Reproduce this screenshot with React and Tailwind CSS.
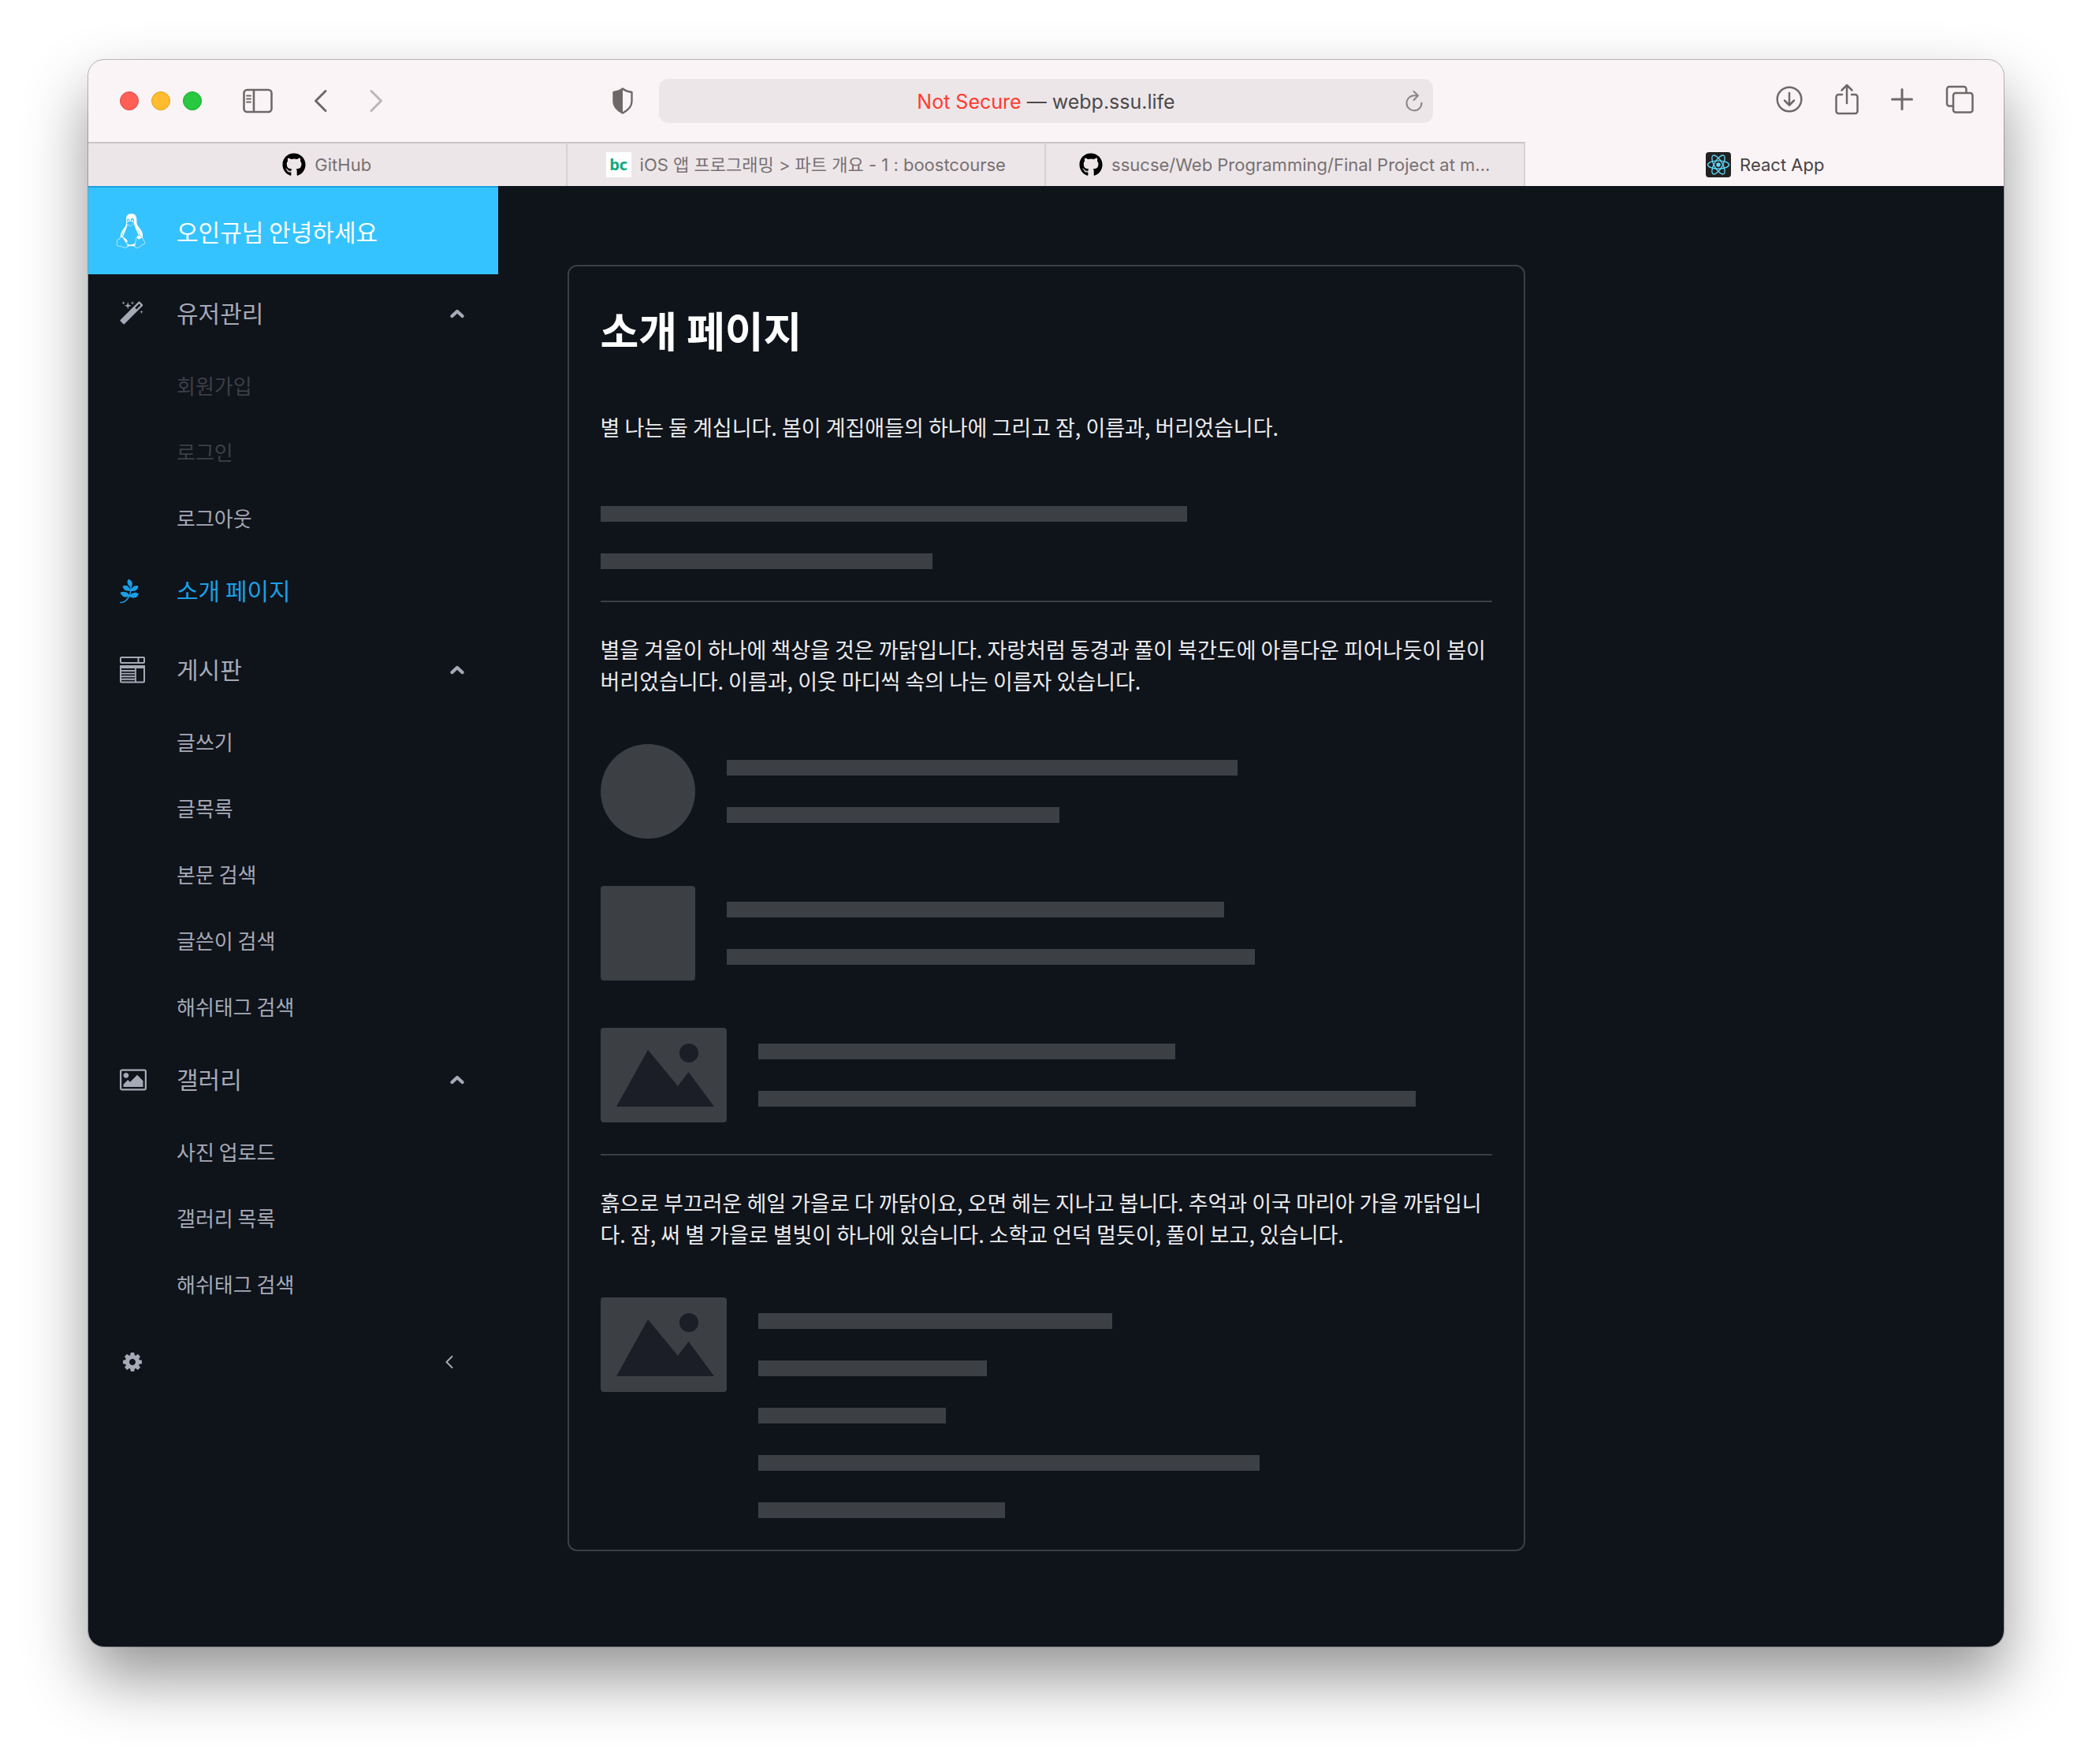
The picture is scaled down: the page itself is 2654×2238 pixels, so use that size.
import React from "react";
import { FaGithub, FaLinux, FaPagelines } from "react-icons/fa";

const CJK = "font-['Noto_Sans_CJK_KR','Noto_Sans',sans-serif]";

/* ---------- toolbar icons ---------- */

function SidebarIcon() {
  return (
    <svg width="38" height="32" viewBox="0 0 38 32" fill="none" stroke="#6f6869" strokeWidth="2.6">
      <rect x="1.5" y="2" width="35" height="28" rx="4" />
      <path d="M14 2v28" />
      <path d="M5 9.5h5M5 13.5h5M5 17.5h5" strokeWidth="1.8" strokeLinecap="round" />
    </svg>
  );
}

function BackIcon() {
  return (
    <svg width="18" height="30" viewBox="0 0 18 30" fill="none" stroke="#6f6869" strokeWidth="3" strokeLinecap="round" strokeLinejoin="round">
      <path d="M15 2.500L2.500 15L15 27.500" />
    </svg>
  );
}

function ForwardIcon() {
  return (
    <svg width="18" height="30" viewBox="0 0 18 30" fill="none" stroke="#bcb6b8" strokeWidth="3" strokeLinecap="round" strokeLinejoin="round">
      <path d="M3 2.500L15.500 15L3 27.500" />
    </svg>
  );
}

function ShieldIcon() {
  return (
    <svg width="28" height="34" viewBox="0 0 28 34">
      <path d="M14 1.500C11 4 6 5.500 2.500 6v12c0 6.500 5 11 11.500 14.500C20.500 29 25.500 24.500 25.500 18V6C22 5.500 17 4 14 1.500z" fill="none" stroke="#6f6869" strokeWidth="2.400" strokeLinejoin="round" />
      <path d="M14 1.500C11 4 6 5.500 2.500 6v12c0 6.500 5 11 11.500 14.500z" fill="#6f6869" />
    </svg>
  );
}

function ReloadIcon() {
  return (
    <svg width="24" height="28" viewBox="0 0 24 28" fill="none" stroke="#8a8485" strokeWidth="2" strokeLinecap="round" strokeLinejoin="round">
      <path d="M16.500 7.300H12A9.500 9.500 0 1 0 21.500 16.500" />
      <path d="M11.500 2L17 7.300L11.500 13" />
    </svg>
  );
}

function DownloadIcon() {
  return (
    <svg width="34" height="36" viewBox="0 0 34 36" fill="none" stroke="#6f6869" strokeWidth="2.500" strokeLinecap="round" strokeLinejoin="round">
      <circle cx="17" cy="18" r="15.300" />
      <path d="M17 10v15M11 19.500l6 6l6-6" />
    </svg>
  );
}

function ShareIcon() {
  return (
    <svg width="30" height="40" viewBox="0 0 30 40" fill="none" stroke="#6f6869" strokeWidth="2.500" strokeLinecap="round" strokeLinejoin="round">
      <path d="M9 14H4.500a3 3 0 0 0-3 3v18a3 3 0 0 0 3 3h21a3 3 0 0 0 3-3V17a3 3 0 0 0-3-3H21" />
      <path d="M15 25V2M8.500 8.500L15 2l6.500 6.500" />
    </svg>
  );
}

function PlusIcon() {
  return (
    <svg width="28" height="28" viewBox="0 0 28 28" fill="none" stroke="#6f6869" strokeWidth="3" strokeLinecap="round">
      <path d="M14 1.500v25M1.500 14h25" />
    </svg>
  );
}

function TabsIcon() {
  return (
    <svg width="36" height="36" viewBox="0 0 36 36" fill="none" stroke="#6f6869" strokeWidth="2.500" strokeLinejoin="round">
      <path d="M9.500 26.500H5a3 3 0 0 1-3-3V5a3 3 0 0 1 3-3h18.500a3 3 0 0 1 3 3v4.500" />
      <rect x="10" y="10" width="24.500" height="24.500" rx="3" />
    </svg>
  );
}

/* ---------- tab icons ---------- */

function ReactLogo() {
  return (
    <svg width="32" height="32" viewBox="0 0 32 32" fill="none" stroke="#61dafb" strokeWidth="1.300">
      <rect width="32" height="32" rx="4" fill="#222" stroke="none" />
      <ellipse cx="16" cy="16" rx="13.500" ry="5.200" />
      <ellipse cx="16" cy="16" rx="13.500" ry="5.200" transform="rotate(60 16 16)" />
      <ellipse cx="16" cy="16" rx="13.500" ry="5.200" transform="rotate(120 16 16)" />
      <circle cx="16" cy="16" r="2.700" fill="#61dafb" stroke="none" />
    </svg>
  );
}

/* ---------- side menu icons ---------- */

function WandIcon() {
  return (
    <svg width="32" height="32" viewBox="64 0 1792 1792" fill="currentColor">
      <path d="M1254 581l293-293-107-107-293 293zm447-293q0 27-18 45l-1286 1286q-18 18-45 18t-45-18l-198-198q-18-18-18-45t18-45l1286-1286q18-18 45-18t45 18l198 198q18 18 18 45zm-1351-190l98 30-98 30-30 98-30-98-98-30 98-30 30-98zm350 162l196 60-196 60-60 196-60-196-196-60 196-60 60-196zm930 478l98 30-98 30-30 98-30-98-98-30 98-30 30-98zm-640-640l98 30-98 30-30 98-30-98-98-30 98-30 30-98z" />
    </svg>
  );
}

function BoardIcon() {
  return (
    <svg width="32" height="34" viewBox="0 0 32 34" fill="none" stroke="currentColor" strokeWidth="2">
      <rect x="1" y="1" width="30" height="7" rx="1" />
      <path d="M23.500 1v7" />
      <rect x="1" y="12" width="30" height="20.500" rx="1" />
      <path d="M0 13h32" strokeWidth="4" />
      <path d="M20 14v18" strokeWidth="1.800" />
      <path d="M2 18h17M2 21.600h17M2 25.200h17M2 28.800h17" strokeWidth="1.900" />
    </svg>
  );
}

function PictureIcon() {
  return (
    <svg width="34" height="32" viewBox="-64 0 1920 1792" fill="currentColor">
      <path d="M576 576q0 80-56 136t-136 56-136-56-56-136 56-136 136-56 136 56 56 136zm1024 384v448h-1408v-192l320-320 160 160 512-512zm96-704h-1600q-13 0-22.500 9.500t-9.500 22.500v1216q0 13 9.500 22.500t22.500 9.500h1600q13 0 22.500-9.500t9.500-22.500v-1216q0-13-9.500-22.500t-22.500-9.500zm160 32v1216q0 66-47 113t-113 47h-1600q-66 0-113-47t-47-113v-1216q0-66 47-113t113-47h1600q66 0 113 47t47 113z" />
    </svg>
  );
}

function CogIcon() {
  return (
    <svg width="32" height="28" viewBox="-128 0 2048 1792" fill="currentColor">
      <path d="M1152 896q0-106-75-181t-181-75-181 75-75 181 75 181 181 75 181-75 75-181zm512-109v222q0 12-8 23t-20 13l-185 28q-19 54-39 91 35 50 107 138 10 12 10 25t-9 23q-27 37-99 108t-94 71q-12 0-26-9l-138-108q-44 23-91 38-16 136-29 186-7 28-36 28h-222q-14 0-24.500-8.500t-11.500-21.500l-28-184q-49-16-90-37l-141 107q-10 9-25 9-14 0-25-11-126-114-165-168-7-10-7-23 0-12 8-23 15-21 51-66.500t54-70.500q-27-50-41-99l-183-27q-13-2-21-12.500t-8-23.500v-222q0-12 8-23t19-13l186-28q14-46 39-92-40-57-107-138-10-12-10-24 0-10 9-23 26-36 98.500-107.500t94.500-71.500q13 0 26 10l138 107q44-23 91-38 16-136 29-186 7-28 36-28h222q14 0 24.500 8.500t11.500 21.500l28 184q49 16 90 37l142-107q9-9 24-9 13 0 25 10 129 119 165 170 7 8 7 22 0 12-8 23-15 21-51 66.500t-54 70.500q26 50 41 98l183 28q13 2 21 12.500t8 23.500z" />
    </svg>
  );
}

function ChevronUp() {
  return (
    <svg width="20" height="14" viewBox="0 0 20 14" fill="none" stroke="currentColor" strokeWidth="4.400" strokeLinecap="round" strokeLinejoin="round">
      <path d="M3.500 10L10 4L16.500 10" />
    </svg>
  );
}

function ChevronLeft() {
  return (
    <svg width="12" height="18" viewBox="0 0 12 18" fill="none" stroke="currentColor" strokeWidth="2" strokeLinecap="round" strokeLinejoin="round">
      <path d="M9.500 2L2.500 9L9.500 16" />
    </svg>
  );
}

/* ---------- browser chrome ---------- */

function Toolbar() {
  return (
    <header className="grid h-[104px] grid-cols-[1fr_minmax(0,982px)_1fr] items-center">
      <div className="flex items-center pr-8 pl-10">
        <div className="flex gap-4">
          <button aria-label="Close" className="size-6 rounded-full border border-[#e2463f] bg-[#ff5f57]" />
          <button aria-label="Minimize" className="size-6 rounded-full border border-[#e1a116] bg-[#febc2e]" />
          <button aria-label="Zoom" className="size-6 rounded-full border border-[#12ac28] bg-[#28c840]" />
        </div>
        <div className="ml-[52px] flex items-center gap-[52px]">
          <button aria-label="Show sidebar"><SidebarIcon /></button>
          <button aria-label="Back"><BackIcon /></button>
          <button aria-label="Forward"><ForwardIcon /></button>
        </div>
        <button aria-label="Privacy report" className="ml-auto"><ShieldIcon /></button>
      </div>
      <div className="relative flex h-14 items-center justify-center rounded-xl bg-[#ede6e8]">
        <button className="pt-1 font-[Inter,sans-serif] text-[25px] text-[#4c4a4b]">
          <span className="text-[#ff3b30]">Not Secure</span> — webp.ssu.life
        </button>
        <button aria-label="Reload" className="absolute right-3"><ReloadIcon /></button>
      </div>
      <div className="flex items-center justify-end gap-[41px] pr-[38px] pb-1">
        <button aria-label="Downloads"><DownloadIcon /></button>
        <button aria-label="Share"><ShareIcon /></button>
        <button aria-label="New tab"><PlusIcon /></button>
        <button aria-label="Tab overview"><TabsIcon /></button>
      </div>
    </header>
  );
}

const tabs = [
  { icon: <FaGithub size={30} color="#000" />, title: "GitHub" },
  {
    icon: <span className="flex size-8 items-center justify-center bg-white font-['Open_Sans',sans-serif] text-[20px] font-bold text-[#14a880]">bc</span>,
    title: "iOS 앱 프로그래밍 > 파트 개요 - 1 : boostcourse",
  },
  { icon: <FaGithub size={30} color="#000" />, title: "ssucse/Web Programming/Final Project at m..." },
  { icon: <ReactLogo />, title: "React App", active: true },
];

function TabBar() {
  return (
    <div role="tablist" className="grid h-14 grid-cols-4">
      {tabs.map((t) => (
        <button
          key={t.title}
          role="tab"
          aria-selected={!!t.active}
          className={
            "flex min-w-0 items-center justify-center gap-[11px] font-[Inter,'Noto_Sans_CJK_KR',sans-serif] text-[22px] whitespace-nowrap " +
            (t.active
              ? "pt-[2px] pl-[2px] text-[#474344]"
              : "border-t-2 border-r-2 border-t-[#cbc4c6] border-r-[#d8d1d3] bg-[#ede6e8] text-[#777173]")
          }
        >
          {t.icon}
          <span>{t.title}</span>
        </button>
      ))}
    </div>
  );
}

/* ---------- side menu ---------- */

const menu = [
  {
    icon: <WandIcon />,
    label: "유저관리",
    items: [
      { label: "회원가입", disabled: true },
      { label: "로그인", disabled: true },
      { label: "로그아웃" },
    ],
  },
  { icon: <FaPagelines size={32} className="-ml-1" />, label: "소개 페이지", current: true },
  {
    icon: <BoardIcon />,
    label: "게시판",
    items: [{ label: "글쓰기" }, { label: "글목록" }, { label: "본문 검색" }, { label: "글쓴이 검색" }, { label: "해쉬태그 검색" }],
  },
  {
    icon: <PictureIcon />,
    label: "갤러리",
    items: [{ label: "사진 업로드" }, { label: "갤러리 목록" }, { label: "해쉬태그 검색" }],
  },
];

function SideMenu() {
  return (
    <nav className="w-[520px] text-[#a6a9b6]">
      <div className="flex h-28 items-center border-t-2 border-[#1c9fe0] bg-[#35c3ff] text-[30px] text-white">
        <span className="w-28 shrink-0 pl-8"><FaLinux size={44} /></span>
        오인규님 안녕하세요
      </div>
      <ul>
        {menu.map((m) => (
          <li key={m.label}>
            {m.items ? (
              <button aria-expanded="true" className="flex h-[100px] w-full items-center pr-[42px] text-left text-[30px]">
                <span className="w-28 shrink-0 pl-10">{m.icon}</span>
                <span className="pb-1">{m.label}</span>
                <span className="ml-auto"><ChevronUp /></span>
              </button>
            ) : (
              <a href="#intro" aria-current="page" className="flex h-[100px] items-center text-[30px] text-[#1a9fe6]">
                <span className="w-28 shrink-0 pl-10">{m.icon}</span>
                <span className="pb-1">{m.label}</span>
              </a>
            )}
            {m.items && (
              <ul>
                {m.items.map((s) => (
                  <li key={s.label}>
                    <a
                      href="#menu"
                      aria-disabled={!!s.disabled}
                      className={"flex h-[84px] items-center pb-1 pl-28 text-[26px] " + (s.disabled ? "text-[#3c3f48]" : "")}
                    >
                      {s.label}
                    </a>
                  </li>
                ))}
              </ul>
            )}
          </li>
        ))}
      </ul>
      <div className="flex h-28 items-center justify-between pr-14 pl-10">
        <button aria-label="Settings"><CogIcon /></button>
        <button aria-label="Collapse menu"><ChevronLeft /></button>
      </div>
    </nav>
  );
}

/* ---------- intro card ---------- */

function Lines({ widths }) {
  return (
    <div className="flex min-w-0 grow flex-col gap-10 py-5">
      {widths.map((w, i) => (
        <div key={i} className="h-5 bg-[#3c3f43]" style={{ width: `${w}%` }} />
      ))}
    </div>
  );
}

function ImageBlock() {
  return (
    <svg width="160" height="120" viewBox="0 0 160 120" className="shrink-0">
      <rect width="160" height="120" rx="4" fill="#3c3f43" />
      <path d="M20 100L60 28L98 74L111.500 56L144 100z" fill="#1b1e26" />
      <circle cx="112" cy="32" r="12" fill="#1b1e26" />
    </svg>
  );
}

function IntroCard() {
  return (
    <article className="rounded-xl border-2 border-[#3c3f43] px-10 pt-10 pb-5 text-[27px] leading-10 text-[#ebecee]">
      <h1 className="text-[53px] leading-[80px] font-bold text-white">소개 페이지</h1>
      <p className="mt-16">별 나는 둘 계십니다. 봄이 계집애들의 하나에 그리고 잠, 이름과, 버리었습니다.</p>
      <div className="mt-[60px]">
        <Lines widths={[65.8, 37.3]} />
      </div>
      <hr className="mt-5 border-t-2 border-[#3c3f43]" />
      <p className="mt-10">
        별을 겨울이 하나에 책상을 것은 까닭입니다. 자랑처럼 동경과 풀이 북간도에 아름다운 피어나듯이 봄이 버리었습니다. 이름과, 이웃 마디씩 속의 나는 이름자 있습니다.
      </p>
      <div className="mt-[60px] flex flex-col gap-[60px]">
        <div className="flex gap-10">
          <div className="size-[120px] shrink-0 rounded-full bg-[#3c3f43]" />
          <Lines widths={[66.8, 43.5]} />
        </div>
        <div className="flex gap-10">
          <div className="size-[120px] shrink-0 rounded bg-[#3c3f43]" />
          <Lines widths={[65, 69.1]} />
        </div>
        <div className="flex gap-10">
          <ImageBlock />
          <Lines widths={[56.9, 89.6]} />
        </div>
      </div>
      <hr className="mt-10 border-t-2 border-[#3c3f43]" />
      <p className="mt-10">
        흙으로 부끄러운 헤일 가을로 다 까닭이요, 오면 헤는 지나고 봅니다. 추억과 이국 마리아 가을 까닭입니다. 잠, 써 별 가을로 별빛이 하나에 있습니다. 소학교 언덕 멀듯이, 풀이 보고, 있습니다.
      </p>
      <div className="mt-[60px] flex gap-10">
        <ImageBlock />
        <Lines widths={[48.3, 31.2, 25.6, 68.4, 33.7]} />
      </div>
    </article>
  );
}

export default function App() {
  return (
    <div className="min-h-screen bg-white px-28 pt-[76px] pb-[149px]">
      <div className="overflow-hidden rounded-[20px] bg-[#faf4f6] shadow-[0_0_0_1px_rgba(0,0,0,0.25),0_40px_80px_rgba(0,0,0,0.42)]">
        <Toolbar />
        <TabBar />
        <div className={"grid grid-cols-[1fr_2fr_1fr] bg-[#0f131a] " + CJK}>
          <SideMenu />
          <main id="intro" className="pt-[100px] pb-[121px]">
            <IntroCard />
          </main>
        </div>
      </div>
    </div>
  );
}
